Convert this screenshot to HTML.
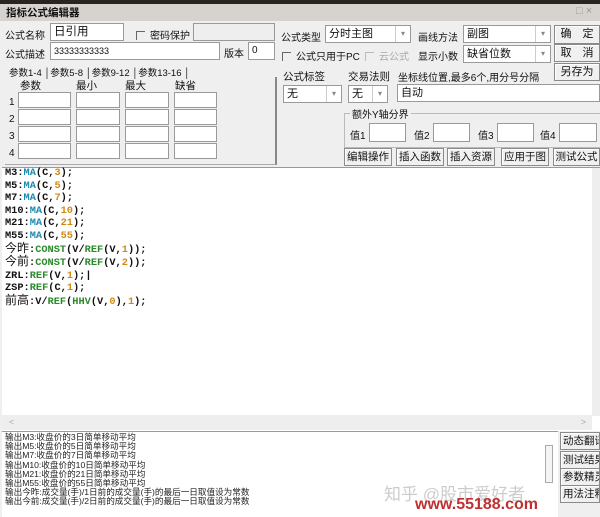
<!DOCTYPE html><html><head><meta charset="utf-8"><style>
*{margin:0;padding:0;box-sizing:border-box}
body{width:600px;height:517px;overflow:hidden;background:#efefef;font-family:"Liberation Sans","Noto Sans CJK SC",sans-serif;font-size:11px;color:#111;position:relative}
.a{position:absolute;white-space:nowrap}
.in{position:absolute;background:#fff;border:1px solid #9a9a9a;font-size:11px;padding:1px 3px;line-height:14px;white-space:nowrap;overflow:hidden}
.btn{position:absolute;background:#f0f0f0;border:1px solid #8a8a8a;box-shadow:inset 1px 1px #fff;text-align:center;font-size:11px;line-height:17px;white-space:nowrap;overflow:hidden}
.dd{position:absolute;right:0;top:0;bottom:0;width:15px;border-left:1px solid #ccc;color:#888;font-size:8px;text-align:center;line-height:16px}
.cb{display:inline-block;width:9px;height:9px;border-left:1px solid #666;border-top:1px solid #666;margin-right:5px;vertical-align:-1px}
.code{position:absolute;left:5px;top:167px;font-family:"Liberation Mono","Noto Sans CJK SC",monospace;font-weight:bold;font-size:10.3px;line-height:12.6px;color:#111}
.f{color:#1a8ab0}.g{color:#2a8a2a}.n{color:#d08a10}
.out{position:absolute;left:5px;top:433px;font-size:8.6px;line-height:9.2px;color:#222}
.l{font-size:10px}
</style></head><body>
<div class="a" style="left:0;top:0;width:600px;height:4px;background:#2a2420"></div>
<div class="a" style="left:0;top:4px;width:600px;height:17px;background:#d6d3cf"></div>
<div class="a" style="left:6px;top:5px;font-weight:bold;font-size:10.5px">指标公式编辑器</div>
<div class="a" style="left:576px;top:5px;color:#999;font-size:11px">□ ×</div>

<div class="a l" style="left:5px;top:27px">公式名称</div>
<div class="in" style="left:50px;top:23px;width:74px;height:18px;font-size:11.5px">日引用</div>
<div class="a l" style="left:136px;top:27px"><span class="cb"></span>密码保护</div>
<div class="in" style="left:193px;top:23px;width:82px;height:18px;background:#eee"></div>
<div class="a l" style="left:5px;top:46px">公式描述</div>
<div class="in" style="left:50px;top:42px;width:170px;height:18px;font-size:9px">33333333333</div>
<div class="a" style="left:224px;top:45px;font-size:10px">版本</div>
<div class="in" style="left:248px;top:42px;width:27px;height:18px;font-size:10px">0</div>

<div class="a" style="left:9px;top:65px;font-size:9.5px">参数1-4 │参数5-8 │参数9-12 │参数13-16 │</div>
<div class="a" style="left:5px;top:77px;width:272px;height:88px;border-right:2px solid #888;border-bottom:1px solid #aaa"></div>
<div class="a" style="left:20px;top:78px;font-size:10.5px">参数</div>
<div class="a" style="left:76px;top:78px;font-size:10.5px">最小</div>
<div class="a" style="left:125px;top:78px;font-size:10.5px">最大</div>
<div class="a" style="left:175px;top:78px;font-size:10.5px">缺省</div>
<div class="a" style="left:9px;top:94px;font-size:10px;line-height:17px">1<br>2<br>3<br>4</div>
<div id="grid"></div>

<div class="a l" style="left:281px;top:29px">公式类型</div>
<div class="in" style="left:325px;top:25px;width:86px;height:18px">分时主图<div class="dd">▾</div></div>
<div class="a l" style="left:418px;top:29px">画线方法</div>
<div class="in" style="left:463px;top:25px;width:88px;height:18px">副图<div class="dd">▾</div></div>
<div class="btn" style="left:554px;top:25px;width:46px;height:19px">确　定</div>
<div class="a" style="left:282px;top:48px;font-size:10px"><span class="cb"></span>公式只用于PC</div>
<div class="a" style="left:365px;top:48px;font-size:10px;color:#aaa"><span class="cb" style="border-color:#bbb"></span>云公式</div>
<div class="a" style="left:418px;top:48px;font-size:10px">显示小数</div>
<div class="in" style="left:463px;top:45px;width:88px;height:18px">缺省位数<div class="dd">▾</div></div>
<div class="btn" style="left:554px;top:44px;width:46px;height:18px">取　消</div>
<div class="btn" style="left:554px;top:63px;width:46px;height:18px">另存为</div>
<div class="a" style="left:283px;top:69px;font-size:10.5px">公式标签</div>
<div class="a" style="left:348px;top:69px;font-size:10.5px">交易法则</div>
<div class="a" style="left:398px;top:69px;font-size:10px">坐标线位置,最多6个,用分号分隔</div>
<div class="in" style="left:283px;top:85px;width:59px;height:18px">无<div class="dd">▾</div></div>
<div class="in" style="left:348px;top:85px;width:40px;height:18px">无<div class="dd">▾</div></div>
<div class="in" style="left:397px;top:84px;width:203px;height:18px">自动</div>
<div class="a" style="left:344px;top:113px;width:256px;height:35px;border:1px solid #bbb;border-right:none"></div>
<div class="a" style="left:350px;top:106px;font-size:10px;background:#efefef;padding:0 2px">额外Y轴分界</div>
<div class="a" style="left:350px;top:127px;font-size:10px">值1</div><div class="in" style="left:369px;top:123px;width:37px;height:19px"></div>
<div class="a" style="left:414px;top:127px;font-size:10px">值2</div><div class="in" style="left:433px;top:123px;width:37px;height:19px"></div>
<div class="a" style="left:478px;top:127px;font-size:10px">值3</div><div class="in" style="left:497px;top:123px;width:37px;height:19px"></div>
<div class="a" style="left:540px;top:127px;font-size:10px">值4</div><div class="in" style="left:559px;top:123px;width:38px;height:19px"></div>
<div class="btn" style="left:344px;top:148px;width:48px;height:18px;font-size:10.5px">编辑操作</div>
<div class="btn" style="left:396px;top:148px;width:48px;height:18px;font-size:10.5px">插入函数</div>
<div class="btn" style="left:447px;top:148px;width:48px;height:18px;font-size:10.5px">插入资源</div>
<div class="btn" style="left:501px;top:148px;width:48px;height:18px;font-size:10.5px">应用于图</div>
<div class="btn" style="left:553px;top:148px;width:47px;height:18px;font-size:10.5px">测试公式</div>

<div class="a" style="left:2px;top:167px;width:598px;height:264px;background:#fff;border-top:1px solid #999"></div>
<div class="a" style="left:592px;top:168px;width:8px;height:248px;background:#eee"></div>
<div class="a" style="left:2px;top:415px;width:590px;height:15px;background:#eee;color:#aaa;font-size:9px;padding-left:7px;line-height:15px">&lt;<span style="float:right;margin-right:6px">&gt;</span></div>
<div class="code">M3:<span class="f">MA</span>(C,<span class="n">3</span>);<br>M5:<span class="f">MA</span>(C,<span class="n">5</span>);<br>M7:<span class="f">MA</span>(C,<span class="n">7</span>);<br>M10:<span class="f">MA</span>(C,<span class="n">10</span>);<br>M21:<span class="f">MA</span>(C,<span class="n">21</span>);<br>M55:<span class="f">MA</span>(C,<span class="n">55</span>);<br><span style="font-weight:normal;font-size:12px">今昨</span>:<span class="g">CONST</span>(V/<span class="g">REF</span>(V,<span class="n">1</span>));<br><span style="font-weight:normal;font-size:12px">今前</span>:<span class="g">CONST</span>(V/<span class="g">REF</span>(V,<span class="n">2</span>));<br>ZRL:<span class="g">REF</span>(V,<span class="n">1</span>);|<br>ZSP:<span class="g">REF</span>(C,<span class="n">1</span>);<br><span style="font-weight:normal;font-size:12px">前高</span>:V/<span class="g">REF</span>(<span class="g">HHV</span>(V,<span class="n">0</span>),<span class="n">1</span>);</div>

<div class="a" style="left:2px;top:431px;width:556px;height:86px;background:#fff;border-top:1px solid #999"></div>
<div class="a" style="left:545px;top:445px;width:8px;height:38px;border:1px solid #aaa;background:#f4f4f4"></div>
<div class="out">输出M3:收盘价的3日简单移动平均<br>输出M5:收盘价的5日简单移动平均<br>输出M7:收盘价的7日简单移动平均<br>输出M10:收盘价的10日简单移动平均<br>输出M21:收盘价的21日简单移动平均<br>输出M55:收盘价的55日简单移动平均<br>输出今昨:成交量(手)/1日前的成交量(手)的最后一日取值设为常数<br>输出今前:成交量(手)/2日前的成交量(手)的最后一日取值设为常数</div>
<div class="btn" style="left:560px;top:432px;width:40px;height:18px;text-align:left;padding-left:2px;font-size:10.5px">动态翻译</div>
<div class="btn" style="left:560px;top:451px;width:40px;height:18px;text-align:left;padding-left:2px;font-size:10.5px">测试结果</div>
<div class="btn" style="left:560px;top:468px;width:40px;height:18px;text-align:left;padding-left:2px;font-size:10.5px">参数精灵</div>
<div class="btn" style="left:560px;top:485px;width:40px;height:18px;text-align:left;padding-left:2px;font-size:10.5px">用法注释</div>
<div class="a" style="left:384px;top:480px;font-size:17px;color:rgba(170,170,170,.6)">知乎 @股市爱好者</div>
<div class="a" style="left:415px;top:496px;font-size:16px;font-weight:bold;color:#c03030">www.55188.com</div>
<script>
var g=document.getElementById('grid'),xs=[18,76,125,174],w=[53,44,44,43];
for(var r=0;r<4;r++)for(var c=0;c<4;c++){var d=document.createElement('div');d.className='in';d.style.cssText='left:'+xs[c]+'px;top:'+(92+r*17)+'px;width:'+w[c]+'px;height:16px';g.appendChild(d);}
</script>
</body></html>
